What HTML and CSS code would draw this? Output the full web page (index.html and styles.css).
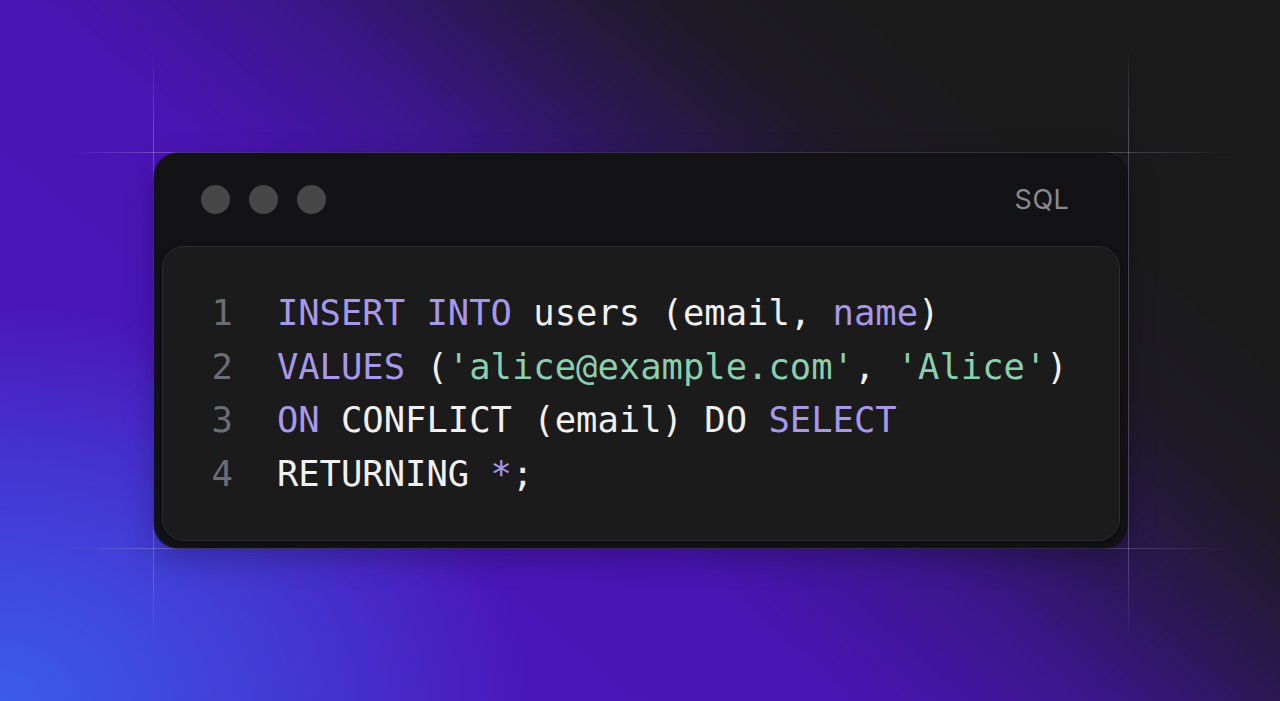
FILE: index.html
```html
<!DOCTYPE html>
<html lang="en">
<head>
<meta charset="utf-8">
<title>SQL snippet</title>
<link rel="stylesheet" href="styles.css">
</head>
<body>
<main class="stage">
  <div class="guides" aria-hidden="true">
    <span class="guide guide-h guide-top"></span>
    <span class="guide guide-h guide-bottom"></span>
    <span class="guide guide-v guide-left"></span>
    <span class="guide guide-v guide-right"></span>
  </div>
  <section class="window">
    <header class="window-bar">
      <div class="dots">
        <span class="dot"></span>
        <span class="dot"></span>
        <span class="dot"></span>
      </div>
      <span class="lang">SQL</span>
    </header>
    <div class="code-panel">
      <div class="code">
        <span class="ln">1</span><span class="line"><span class="kw">INSERT</span> <span class="kw">INTO</span> users (email, <span class="kw">name</span>)</span>
        <span class="ln">2</span><span class="line"><span class="kw">VALUES</span> (<span class="str">'alice@example.com'</span>, <span class="str">'Alice'</span>)</span>
        <span class="ln">3</span><span class="line"><span class="kw">ON</span> CONFLICT (email) DO <span class="kw">SELECT</span></span>
        <span class="ln">4</span><span class="line">RETURNING <span class="kw">*</span>;</span>
      </div>
    </div>
  </section>
</main>
</body>
</html>
```

FILE: styles.css
```css
* { box-sizing: border-box; }

html, body {
  margin: 0;
  height: 100%;
}

body {
  background:
    radial-gradient(ellipse 55% 75% at 0% 100%, rgba(58, 96, 236, 0.95) 0%, rgba(62, 80, 226, 0.6) 40%, rgba(62, 60, 220, 0) 75%),
    linear-gradient(41deg, #4a1ac4 0%, #4a14b4 40%, #3c168e 52%, #2a1850 62%, #1e1a26 71%, #1a1a1a 80%, #1a1a1a 100%);
  font-family: "Inter", "Liberation Sans", sans-serif;
  display: flex;
  align-items: center;
  justify-content: center;
  overflow: hidden;
}

.stage {
  position: relative;
  width: 973px;
  height: 395px;
}

.guides {
  position: absolute;
  inset: 0;
  pointer-events: none;
}

.guide {
  position: absolute;
  display: block;
}

.guide-h {
  height: 1px;
  left: -85px;
  right: -105px;
  background: linear-gradient(90deg, rgba(255,255,255,0) 0%, rgba(230,220,255,0.28) 8%, rgba(230,220,255,0.28) 88%, rgba(255,255,255,0) 100%);
}
.guide-top { top: -1px; }
.guide-bottom { bottom: -1px; }

.guide-v {
  width: 1px;
  top: -105px;
  bottom: -95px;
  background: linear-gradient(180deg, rgba(255,255,255,0) 0%, rgba(230,220,255,0.26) 14%, rgba(230,220,255,0.26) 84%, rgba(255,255,255,0) 100%);
}
.guide-left { left: -1px; }
.guide-right { right: -2px; }

.window {
  position: relative;
  width: 100%;
  height: 100%;
  background: #131316;
  border-radius: 24px;
  box-shadow: 0 0 0 1px rgba(0, 0, 0, 0.35), 0 10px 30px rgba(0, 0, 0, 0.25);
  display: flex;
  flex-direction: column;
  padding: 0 7px 7px 8px;
}

.window-bar {
  height: 93px;
  flex: none;
  display: flex;
  align-items: center;
  justify-content: space-between;
  padding: 0 50px 0 39px;
}

.dots {
  display: flex;
  gap: 19px;
}

.dot {
  width: 29px;
  height: 29px;
  border-radius: 50%;
  background: #474747;
}

.lang {
  font-size: 27px;
  color: #8b8b8d;
  letter-spacing: 0.6px;
}

.code-panel {
  flex: 1;
  background: #1b1b1b;
  border: 1px solid #2d2d2f;
  border-radius: 22px;
  box-shadow: 0 2px 6px rgba(0, 0, 0, 0.4);
  padding: 39px 40px 39px 49px;
}

.code {
  display: grid;
  grid-template-columns: auto 1fr;
  column-gap: 44px;
  font-family: "DejaVu Sans Mono", "Liberation Mono", monospace;
  font-size: 35.5px;
  line-height: 53.5px;
  color: #f1f1f1;
  white-space: pre;
}

.ln {
  color: #6a6d76;
}

.kw { color: #a898ea; }
.str { color: #8ccfae; }
```
